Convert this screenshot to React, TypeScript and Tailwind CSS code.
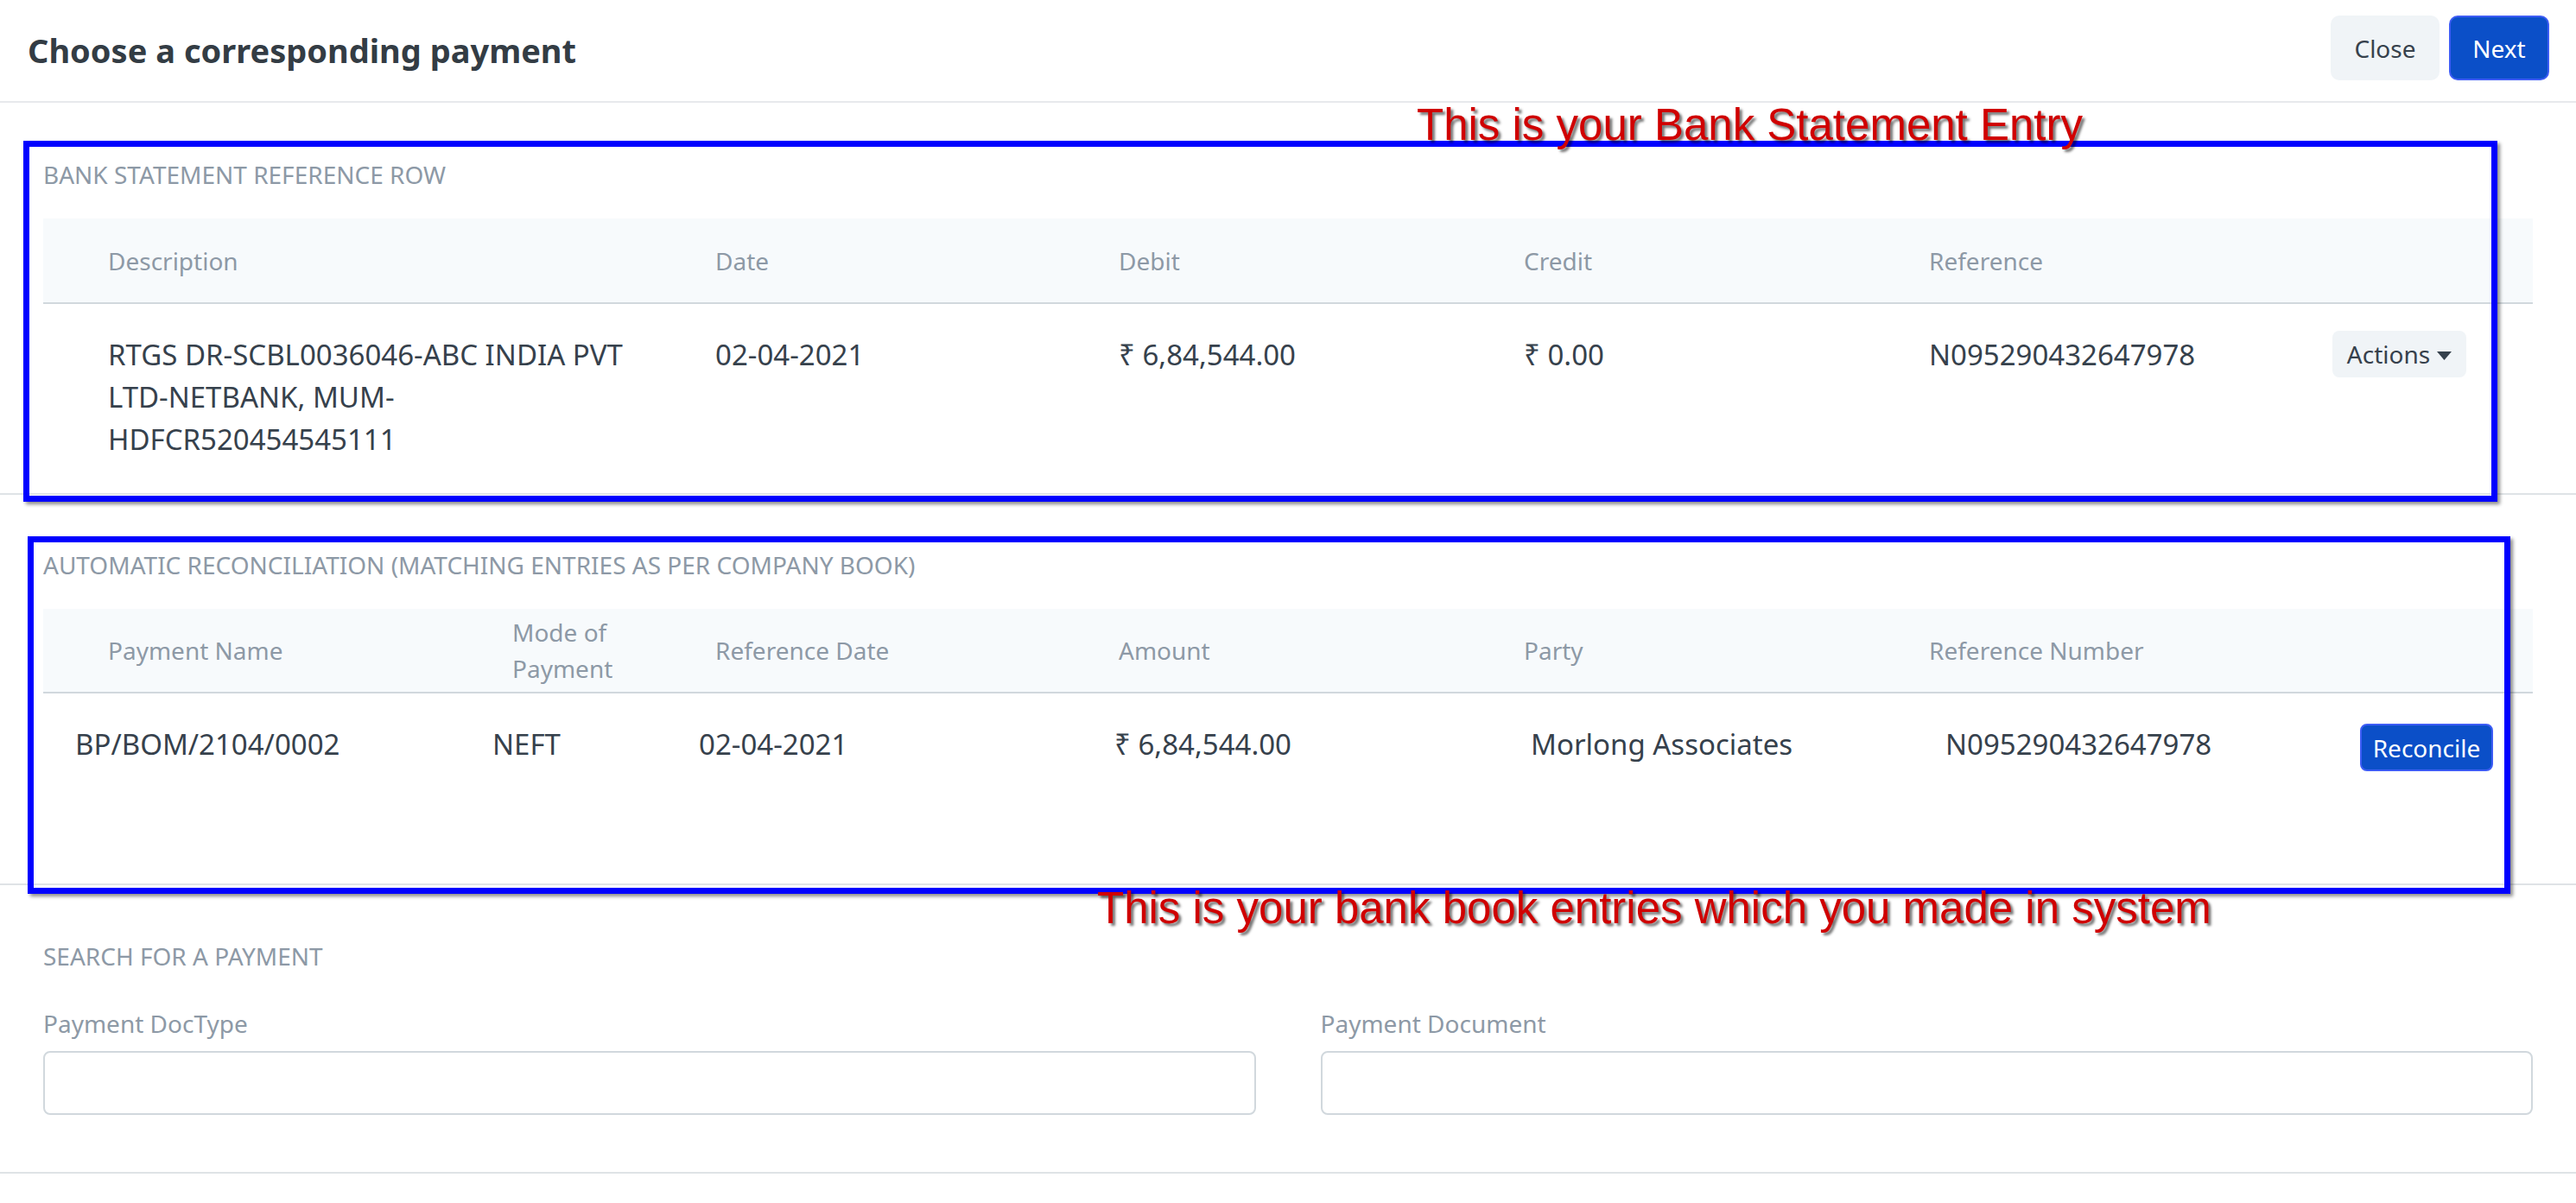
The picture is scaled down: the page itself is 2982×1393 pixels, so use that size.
import { ReactNode } from "react";

type Col = { label: ReactNode; className?: string };

const bankHeaders: Col[] = [
  { label: "Description", className: "pl-[75px]" },
  { label: "Date" },
  { label: "Debit" },
  { label: "Credit" },
  { label: "Reference" },
  { label: "" },
];

const matchHeaders: Col[] = [
  { label: "Payment Name", className: "pl-[75px]" },
  { label: <span className="block w-[120px] leading-[42px]">Mode of Payment</span> },
  { label: "Reference Date" },
  { label: "Amount" },
  { label: "Party" },
  { label: "Reference Number" },
  { label: "" },
];

function SectionLabel({ children }: { children: ReactNode }) {
  return <div className="text-[28px] leading-[34px] uppercase text-[#8d99a6]">{children}</div>;
}

function Caret() {
  return (
    <svg width="17" height="10" viewBox="0 0 17 10" className="mt-[3px]">
      <path d="M0 0h17L8.5 10z" fill="#36414c" />
    </svg>
  );
}

function Field({ label }: { label: string }) {
  return (
    <div>
      <div className="text-[28px] leading-[36px] text-[#8d99a6]">{label}</div>
      <div className="mt-[14px] h-[74px] rounded-[8px] border-2 border-[#d1d8dd] bg-white" />
    </div>
  );
}

export default function App() {
  return (
    <div className="relative h-[1393px] w-[2982px] overflow-hidden bg-white font-['Noto_Sans',sans-serif] text-[#36414c]">
      {/* modal header */}
      <header className="flex h-[119px] items-center justify-between border-b-2 border-[#e7e9ec] pl-[32px] pr-[31px]">
        <h1 className="text-[38px] font-bold text-[#333c44]">Choose a corresponding payment</h1>
        <div className="mb-[6px] flex gap-[11px]">
          <button className="h-[75px] w-[126px] rounded-[10px] bg-[#f0f4f7] text-[28px] text-[#36414c]">Close</button>
          <button className="h-[75px] w-[116px] rounded-[10px] border-2 border-[#3d5cf5] bg-[#0b4fc8] text-[28px] text-white">
            Next
          </button>
        </div>
      </header>

      {/* bank statement row */}
      <section className="h-[454px] border-b-2 border-[#dfe3e6] px-[50px] pt-[66px]">
        <SectionLabel>Bank Statement Reference Row</SectionLabel>
        <div className="mt-[34px] grid h-[99px] grid-cols-[778px_467px_469px_469px_467px_1fr] items-center border-b-2 border-[#d1d8dd] bg-[#f7fafc] text-[28px] text-[#8d99a6]">
          {bankHeaders.map((h, i) => (
            <div key={i} className={h.className}>
              {h.label}
            </div>
          ))}
        </div>
        <div className="grid grid-cols-[778px_467px_469px_469px_467px_1fr] items-start pt-[34px] text-[33px] leading-[49px]">
          <div className="pl-[75px]">
            <span className="block">RTGS DR-SCBL0036046-ABC INDIA PVT</span>
            <span className="block">LTD-NETBANK, MUM-</span>
            <span className="block">HDFCR520454545111</span>
          </div>
          <div>02-04-2021</div>
          <div>₹ 6,84,544.00</div>
          <div>₹ 0.00</div>
          <div>N095290432647978</div>
          <div>
            <button className="-mt-[3px] flex h-[54px] w-[155px] items-center justify-center gap-[8px] rounded-[8px] bg-[#f0f4f7] text-[28px] leading-none text-[#36414c]">
              Actions
              <Caret />
            </button>
          </div>
        </div>
      </section>

      {/* automatic reconciliation */}
      <section className="h-[452px] border-b-2 border-[#dfe3e6] px-[50px] pt-[64px]">
        <SectionLabel>Automatic Reconciliation (matching entries as per company book)</SectionLabel>
        <div className="mt-[34px] grid h-[98px] grid-cols-[543px_235px_467px_469px_469px_467px_1fr] items-center border-b-2 border-[#d1d8dd] bg-[#f7fafc] text-[28px] text-[#8d99a6]">
          {matchHeaders.map((h, i) => (
            <div key={i} className={h.className}>
              {h.label}
            </div>
          ))}
        </div>
        <div className="grid grid-cols-[520px_239px_481px_482px_480px_480px_1fr] items-start pt-[34px] text-[33px] leading-[49px]">
          <div className="pl-[37px]">BP/BOM/2104/0002</div>
          <div>NEFT</div>
          <div>02-04-2021</div>
          <div>₹ 6,84,544.00</div>
          <div>Morlong Associates</div>
          <div>N095290432647978</div>
          <div>
            <button className="mt-[1px] h-[55px] w-[154px] rounded-[8px] border-2 border-[#3d5cf5] bg-[#0b4fc8] text-[28px] leading-none text-white">
              Reconcile
            </button>
          </div>
        </div>
      </section>

      {/* manual search */}
      <section className="h-[334px] border-b-2 border-[#dfe3e6] px-[50px] pt-[65px]">
        <SectionLabel>Search for a Payment</SectionLabel>
        <div className="mt-[43px] grid grid-cols-2 gap-[75px]">
          <Field label="Payment DocType" />
          <Field label="Payment Document" />
        </div>
      </section>

      {/* annotations drawn over the screenshot */}
      <div className="pointer-events-none absolute left-[27px] top-[163px] h-[418px] w-[2864px] border-[7px] border-[#0000ff] shadow-[3px_3px_4px_rgba(0,0,0,0.45)]" />
      <div className="pointer-events-none absolute left-[32px] top-[621px] h-[414px] w-[2874px] border-[7px] border-[#0000ff] shadow-[3px_3px_4px_rgba(0,0,0,0.45)]" />
      <div className="pointer-events-none absolute left-[1640px] top-[119px] font-['Liberation_Sans',Arial,sans-serif] text-[51px] leading-none text-[#d00000] [text-shadow:3px_3px_3px_rgba(0,0,0,0.55)]">
        This is your Bank Statement Entry
      </div>
      <div className="pointer-events-none absolute left-[1270px] top-[1026px] font-['Liberation_Sans',Arial,sans-serif] text-[51px] leading-none text-[#d00000] [text-shadow:3px_3px_3px_rgba(0,0,0,0.55)]">
        This is your bank book entries which you made in system
      </div>
    </div>
  );
}
